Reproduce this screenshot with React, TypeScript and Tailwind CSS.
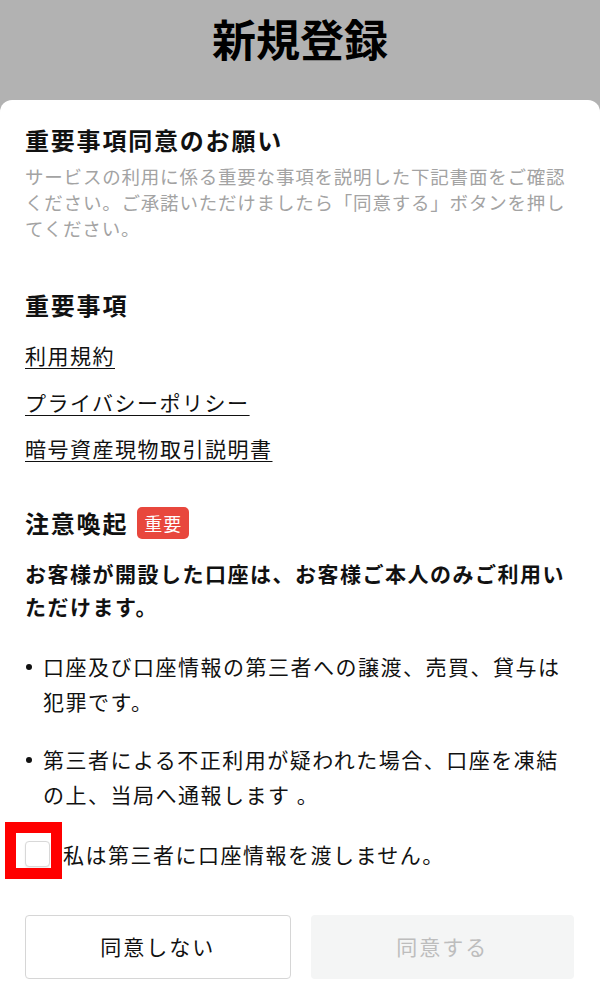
import React from "react";

const FONT = '"Noto Sans CJK JP", "Noto Sans", sans-serif';

function Bullet({ children }: { children: React.ReactNode }) {
  return (
    <li className="flex text-[21px] leading-[35px] tracking-[1.5px] text-[#111]">
      <span className="w-[18px] shrink-0 flex items-start pt-[15px] pl-[1px]">
        <span className="block w-[6px] h-[6px] rounded-full bg-[#111]" />
      </span>
      <span>{children}</span>
    </li>
  );
}

export default function App() {
  return (
    <div
      className="w-[600px] h-[1000px] bg-[#b2b2b2] flex flex-col overflow-hidden"
      style={{ fontFamily: FONT }}
    >
      <div className="h-[100px] flex justify-center pt-[6px]">
        <h1 className="text-[44px] leading-[64px] font-bold text-black">新規登録</h1>
      </div>
      <div className="flex-1 bg-white rounded-t-[12px] px-[25px] pt-[24px] flex flex-col">
        <h2 className="text-[24px] leading-[32px] font-bold tracking-[1.8px] text-[#111]">
          重要事項同意のお願い
        </h2>
        <p className="mt-[7px] text-[18.5px] leading-[26px] tracking-[0.8px] text-[#a3a3a3]">
          サービスの利用に係る重要な事項を説明した下記書面をご確認ください。ご承諾いただけましたら「同意する」ボタンを押してください。
        </p>

        <h3 className="mt-[48px] text-[24px] leading-[32px] font-bold tracking-[1.8px] text-[#111]">
          重要事項
        </h3>
        <div className="mt-[19px] flex flex-col gap-[16.5px] items-start">
          <a className="text-[21px] leading-[30px] tracking-[1.5px] text-[#111] underline decoration-1 underline-offset-[4px]">
            利用規約
          </a>
          <a className="text-[21px] leading-[30px] tracking-[1.5px] text-[#111] underline decoration-1 underline-offset-[4px]">
            プライバシーポリシー
          </a>
          <a className="text-[21px] leading-[30px] tracking-[1.5px] text-[#111] underline decoration-1 underline-offset-[4px]">
            暗号資産現物取引説明書
          </a>
        </div>

        <div className="mt-[44px] flex items-center h-[32px]">
          <h3 className="text-[24px] leading-[32px] font-bold tracking-[1.8px] text-[#111]">注意喚起</h3>
          <span className="ml-[9px] h-[32px] px-[7px] rounded-[5px] bg-[#e8473d] text-white text-[18px] leading-[32px] tracking-[1px] flex items-center">
            重要
          </span>
        </div>

        <p className="mt-[18px] text-[21px] leading-[33px] font-bold tracking-[1.5px] text-[#111]">
          お客様が開設した口座は、お客様ご本人のみご利用いただけます。
        </p>

        <ul className="mt-[26px] flex flex-col gap-[23px]">
          <Bullet>口座及び口座情報の第三者への譲渡、売買、貸与は犯罪です。</Bullet>
          <Bullet>第三者による不正利用が疑われた場合、口座を凍結の上、当局へ通報します 。</Bullet>
        </ul>

        <div className="mt-[25px] flex items-center h-[34px]">
          <div className="relative w-[25px] h-[26px] shrink-0">
            <div className="w-[25px] h-[26px] rounded-[4px] border border-[#d8d8d8] bg-white shadow-[0_1px_2px_rgba(0,0,0,0.08)]" />
            <div className="absolute left-[-20px] top-[-19px] w-[57px] h-[57px] border-[11px] border-[#ff0000]" />
          </div>
          <span className="ml-[13px] text-[21px] leading-[34px] tracking-[1.5px] text-[#111]">
            私は第三者に口座情報を渡しません。
          </span>
        </div>

        <div className="mt-[44px] flex gap-[20px] pr-[1px]">
          <button className="flex-1 h-[64px] rounded-[4px] border border-[#d6d6d6] bg-white text-[21px] tracking-[2px] text-[#111]">
            同意しない
          </button>
          <button className="flex-1 h-[64px] rounded-[4px] bg-[#f4f5f5] text-[21px] tracking-[2px] text-[#bdbdbd]">
            同意する
          </button>
        </div>
      </div>
    </div>
  );
}
